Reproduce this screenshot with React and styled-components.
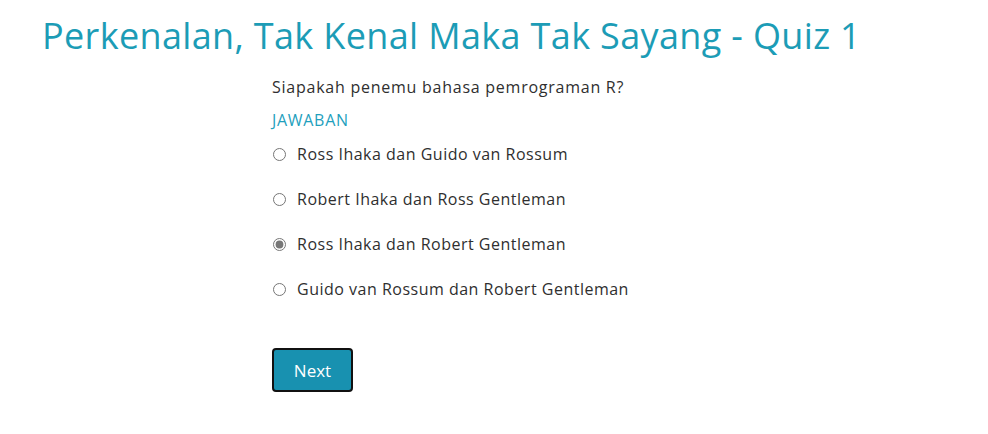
import React, { useState } from 'react';
import styled, { createGlobalStyle } from 'styled-components';

const GlobalStyle = createGlobalStyle`
  body {
    margin: 0;
    background: #fff;
    font-family: "Open Sans", "Noto Sans", sans-serif;
    color: #2b2b2b;
  }
`;

const Page = styled.div`
  padding: 14px 0 0 42px;
`;

const Title = styled.h1`
  margin: 0;
  font-size: 36px;
  font-weight: 400;
  line-height: 44px;
  color: #1c9cb6;
  letter-spacing: 0.35px;
`;

const Quiz = styled.div`
  width: 444px;
  margin: 17px auto 0;
  transform: translateX(-21px);
`;

const Question = styled.p`
  margin: 0;
  font-size: 16px;
  line-height: 24px;
  letter-spacing: 0.75px;
  color: #2f2f2f;
`;

const Label = styled.div`
  margin-top: 9px;
  font-size: 16px;
  line-height: 24px;
  color: #1f9fbd;
  letter-spacing: 0.7px;
`;

const Options = styled.div`
  display: flex;
  flex-direction: column;
  gap: 21px;
  margin-top: 10px;
`;

const Option = styled.label`
  display: flex;
  align-items: center;
  gap: 11px;
  font-size: 16px;
  line-height: 24px;
  letter-spacing: 0.5px;
  color: #2f2f2f;
  cursor: pointer;
`;

const Radio = styled.input`
  width: 13px;
  height: 13px;
  margin: 0 0 0 1px;
  accent-color: #777;
`;

const NextButton = styled.button`
  margin-top: 47px;
  width: 81px;
  height: 44px;
  border: 2px solid #111;
  border-radius: 4px;
  background: #1891b0;
  color: #fff;
  font-family: inherit;
  font-size: 17px;
  cursor: pointer;
`;

const answers = [
  'Ross Ihaka dan Guido van Rossum',
  'Robert Ihaka dan Ross Gentleman',
  'Ross Ihaka dan Robert Gentleman',
  'Guido van Rossum dan Robert Gentleman',
];

export default function App() {
  const [picked, setPicked] = useState(2);
  return (
    <>
      <GlobalStyle />
      <Page>
        <Title>Perkenalan, Tak Kenal Maka Tak Sayang - Quiz 1</Title>
        <Quiz>
          <Question>Siapakah penemu bahasa pemrograman R?</Question>
          <Label>JAWABAN</Label>
          <Options>
            {answers.map((a, i) => (
              <Option key={a}>
                <Radio
                  type="radio"
                  name="answer"
                  checked={picked === i}
                  onChange={() => setPicked(i)}
                />
                {a}
              </Option>
            ))}
          </Options>
          <NextButton>Next</NextButton>
        </Quiz>
      </Page>
    </>
  );
}
